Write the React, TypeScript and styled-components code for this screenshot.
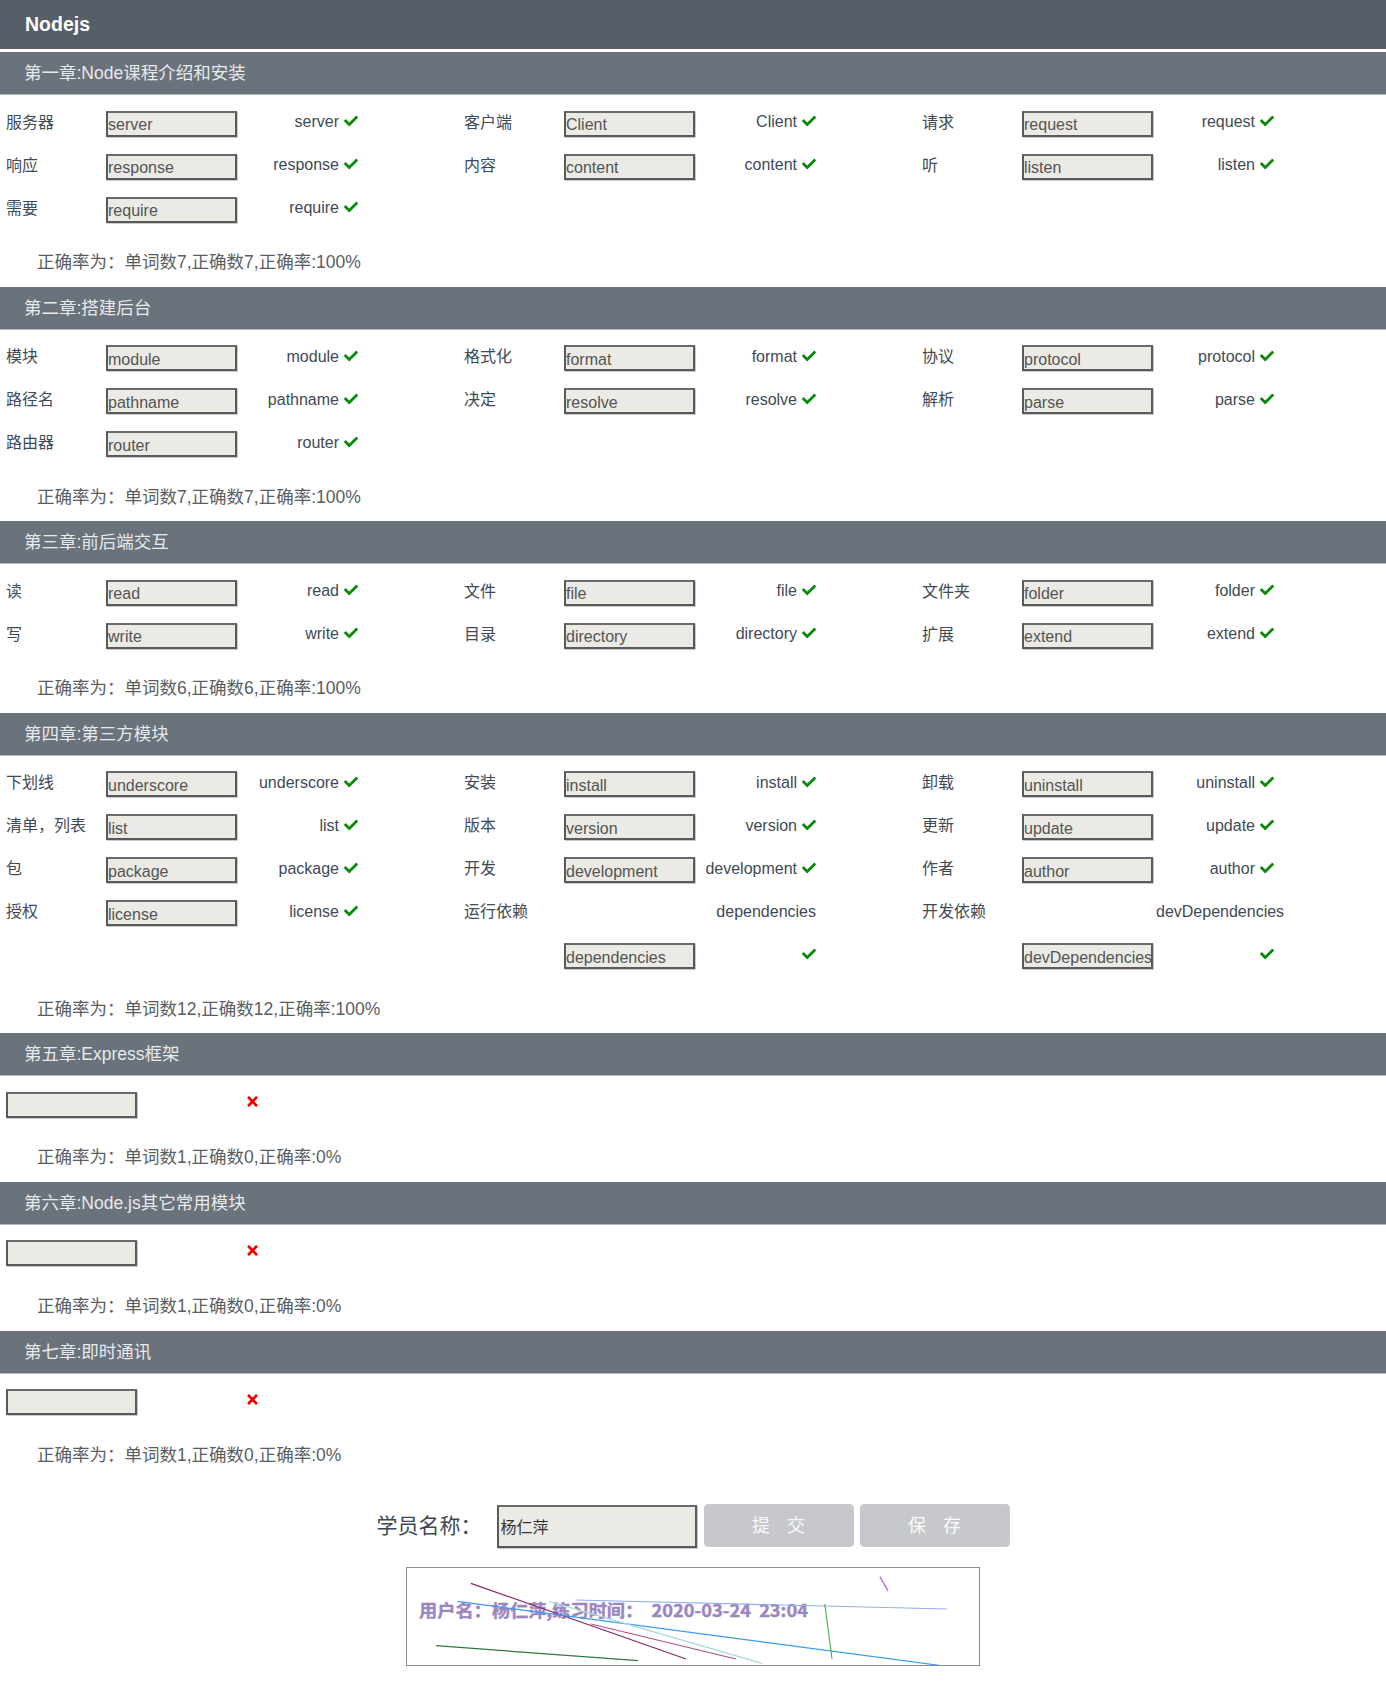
import React from "react";
import styled, { createGlobalStyle } from "styled-components";
import { FaCheck, FaTimes } from "react-icons/fa";

const GlobalStyle = createGlobalStyle`
  html, body { margin: 0; padding: 0; background: #fff; }
  body { font-family: "Liberation Sans", "Noto Sans CJK SC", sans-serif; }
  * { box-sizing: border-box; }
`;

type Cell = {
  label?: string;
  bare?: boolean;
  value?: string;
  noInput?: boolean;
  answer?: string;
  mark?: "ok" | "bad" | null;
};

type Chapter = {
  title: string;
  rows: (Cell | null)[][];
  summary: string;
};

const ok = (label: string, word: string): Cell => ({ label, value: word, answer: word, mark: "ok" });
const bad: Cell = { bare: true, value: "", answer: "", mark: "bad" };

const chapters: Chapter[] = [
  {
    title: "第一章:Node课程介绍和安装",
    rows: [
      [ok("服务器", "server"), ok("客户端", "Client"), ok("请求", "request")],
      [ok("响应", "response"), ok("内容", "content"), ok("听", "listen")],
      [ok("需要", "require")],
    ],
    summary: "正确率为：单词数7,正确数7,正确率:100%",
  },
  {
    title: "第二章:搭建后台",
    rows: [
      [ok("模块", "module"), ok("格式化", "format"), ok("协议", "protocol")],
      [ok("路径名", "pathname"), ok("决定", "resolve"), ok("解析", "parse")],
      [ok("路由器", "router")],
    ],
    summary: "正确率为：单词数7,正确数7,正确率:100%",
  },
  {
    title: "第三章:前后端交互",
    rows: [
      [ok("读", "read"), ok("文件", "file"), ok("文件夹", "folder")],
      [ok("写", "write"), ok("目录", "directory"), ok("扩展", "extend")],
    ],
    summary: "正确率为：单词数6,正确数6,正确率:100%",
  },
  {
    title: "第四章:第三方模块",
    rows: [
      [ok("下划线", "underscore"), ok("安装", "install"), ok("卸载", "uninstall")],
      [ok("清单，列表", "list"), ok("版本", "version"), ok("更新", "update")],
      [ok("包", "package"), ok("开发", "development"), ok("作者", "author")],
      [
        ok("授权", "license"),
        { label: "运行依赖", noInput: true, answer: "dependencies", mark: null },
        { label: "开发依赖", noInput: true, answer: "devDependencies", mark: null },
      ],
      [
        null,
        { label: "", value: "dependencies", answer: "", mark: "ok" },
        { label: "", value: "devDependencies", answer: "", mark: "ok" },
      ],
    ],
    summary: "正确率为：单词数12,正确数12,正确率:100%",
  },
  {
    title: "第五章:Express框架",
    rows: [[bad]],
    summary: "正确率为：单词数1,正确数0,正确率:0%",
  },
  {
    title: "第六章:Node.js其它常用模块",
    rows: [[bad]],
    summary: "正确率为：单词数1,正确数0,正确率:0%",
  },
  {
    title: "第七章:即时通讯",
    rows: [[bad]],
    summary: "正确率为：单词数1,正确数0,正确率:0%",
  },
];

const Page = styled.div`
  width: 100%;
  padding-bottom: 20px;
`;

const TopBar = styled.header`
  height: 52px;
  background: #565e68;
  border-bottom: 3px solid #fff;
  color: #fff;
  font-weight: bold;
  font-size: 19.5px;
  line-height: 49px;
  padding-left: 25px;
`;

const Section = styled.section`
  padding-bottom: 4.6px;
`;

const ChapterBar = styled.h2`
  margin: 0;
  height: 43px;
  background: #6a727c;
  border-bottom: 1px solid #b4b9be;
  color: #e8e9ea;
  font-weight: normal;
  font-size: 17.5px;
  line-height: 42px;
  padding-left: 24px;
`;

const Rows = styled.div`
  display: grid;
  grid-template-columns: repeat(3, 458px);
  grid-auto-rows: 43px;
  padding: 8px 0 0 6px;
`;

const Group = styled.div`
  display: flex;
  align-items: center;
  min-width: 0;
`;

const Label = styled.span`
  flex: none;
  width: 100px;
  font-size: 16px;
  line-height: 20px;
  color: #3f4a57;
  white-space: nowrap;
  margin-top: -4px;
`;

const WordInput = styled.input`
  flex: none;
  width: 131px;
  height: 26px;
  margin: -2px 0 0 0;
  padding: 3px 0 0 0;
  background: #ebeae4;
  border: 2px solid #5a5a5a;
  border-top-color: #6a6a6a;
  box-shadow: 1px 1px 0 #cbcbcb;
  font-family: "Liberation Sans", "Noto Sans CJK SC", sans-serif;
  font-size: 16px;
  color: #555;
  outline: none;
`;

const InputSpace = styled.span`
  flex: none;
  width: 131px;
  height: 26px;
`;

const Answer = styled.span`
  flex: none;
  width: 121px;
  display: block;
  padding-left: 3px;
  text-align: right;
  white-space: nowrap;
  font-size: 16px;
  line-height: 20px;
  color: #3f4a57;
  margin-top: -5px;
`;

const Mark = styled.span<{ $bad?: boolean }>`
  display: inline-block;
  margin-left: 5px;
  margin-right: ${(p) => (p.$bad ? "-2px" : "0")};
  color: ${(p) => (p.$bad ? "#f20000" : "#0a8a0a")};
  vertical-align: -1px;
  svg { display: block; }
`;

const Summary = styled.div`
  margin-top: 10px;
  height: 40px;
  line-height: 40px;
  padding-left: 37px;
  font-size: 17.5px;
  color: #595e63;
`;

const FormRow = styled.div`
  margin-top: 26px;
  display: flex;
  justify-content: center;
  align-items: center;
  height: 43px;
`;

const FormLabel = styled.span`
  font-size: 21px;
  color: #3d4854;
  margin-right: 15px;
  margin-top: -5px;
  white-space: nowrap;
`;

const NameInput = styled.input`
  width: 200px;
  height: 43px;
  margin: -1px 7px 0 0;
  padding: 0 2px;
  background: #ebeae4;
  border: 2px solid #5a5a5a;
  border-top-color: #6a6a6a;
  box-shadow: 1px 1px 0 #cbcbcb;
  font-family: "Liberation Sans", "Noto Sans CJK SC", sans-serif;
  font-size: 16px;
  color: #333;
  outline: none;
`;

const ActionButton = styled.button`
  width: 150px;
  height: 43px;
  margin: -3px 0 0 0;
  border: 1px solid #c9cacd;
  border-radius: 4px;
  background: #c7c8cb;
  color: #fafafa;
  font-family: "Liberation Sans", "Noto Sans CJK SC", sans-serif;
  font-size: 18px;
  letter-spacing: 6px;
  padding: 0 0 2px 6px;
  & + & { margin-left: 6px; }
`;

const CaptchaWrap = styled.div`
  display: flex;
  justify-content: center;
  margin-top: 19px;
`;

const Captcha = styled.div`
  width: 574px;
  height: 99px;
  border: 1px solid #8c8c8c;
  background: #fff;
  svg { display: block; }
`;

const lines: [number, number, number, number, string, number][] = [
  [63.8, 15.3, 279, 91, "#8a2c6c", 1.3],
  [50.4, 33.3, 534.7, 97.7, "#3a9cf5", 1.2],
  [168.7, 32, 540, 41, "#8fb0ee", 1.2],
  [142, 33.3, 355, 95.3, "#a9dadb", 1.2],
  [184, 56, 329, 91, "#b0508a", 1.2],
  [29, 77.7, 231, 92.7, "#2f7a3a", 1.3],
  [417.8, 36, 425, 91, "#4cae54", 1.2],
  [473, 8.7, 481, 22.7, "#a65de0", 1.3],
];

function CellView({ cell }: { cell: Cell | null }) {
  if (!cell) return <Group />;
  return (
    <Group>
      {!cell.bare && <Label>{cell.label}</Label>}
      {cell.noInput ? <InputSpace /> : <WordInput readOnly value={cell.value ?? ""} />}
      <Answer>
        {cell.answer}
        {cell.mark === "ok" && (
          <Mark>
            <FaCheck size={14} />
          </Mark>
        )}
        {cell.mark === "bad" && (
          <Mark $bad>
            <FaTimes size={15} />
          </Mark>
        )}
      </Answer>
    </Group>
  );
}

export default function App() {
  return (
    <Page>
      <GlobalStyle />
      <TopBar>Nodejs</TopBar>
      {chapters.map((ch) => (
        <Section key={ch.title}>
          <ChapterBar>{ch.title}</ChapterBar>
          <Rows>
            {ch.rows.map((row, ri) =>
              [0, 1, 2].map((ci) => <CellView key={`${ri}-${ci}`} cell={row[ci] ?? null} />)
            )}
          </Rows>
          <Summary>{ch.summary}</Summary>
        </Section>
      ))}
      <FormRow>
        <FormLabel>学员名称：</FormLabel>
        <NameInput readOnly value="杨仁萍" />
        <ActionButton>提 交</ActionButton>
        <ActionButton>保 存</ActionButton>
      </FormRow>
      <CaptchaWrap>
        <Captcha>
          <svg width="572" height="97" viewBox="0 0 572 97">
            <text
              x="12"
              y="49"
              fill="#9d86c0"
              stroke="#9d86c0"
              strokeWidth="0.4"
              fontFamily='"Noto Sans CJK SC", "Liberation Sans", sans-serif'
              fontWeight="bold"
              fontSize="17"
              textLength="389"
              lengthAdjust="spacingAndGlyphs"
              xmlSpace="preserve"
              style={{ whiteSpace: "pre" }}
            >
              {"用户名：杨仁萍,练习时间：  2020-03-24  23:04"}
            </text>
            {lines.map(([x1, y1, x2, y2, c, w], i) => (
              <line key={i} x1={x1} y1={y1} x2={x2} y2={y2} stroke={c} strokeWidth={w} />
            ))}
          </svg>
        </Captcha>
      </CaptchaWrap>
    </Page>
  );
}
